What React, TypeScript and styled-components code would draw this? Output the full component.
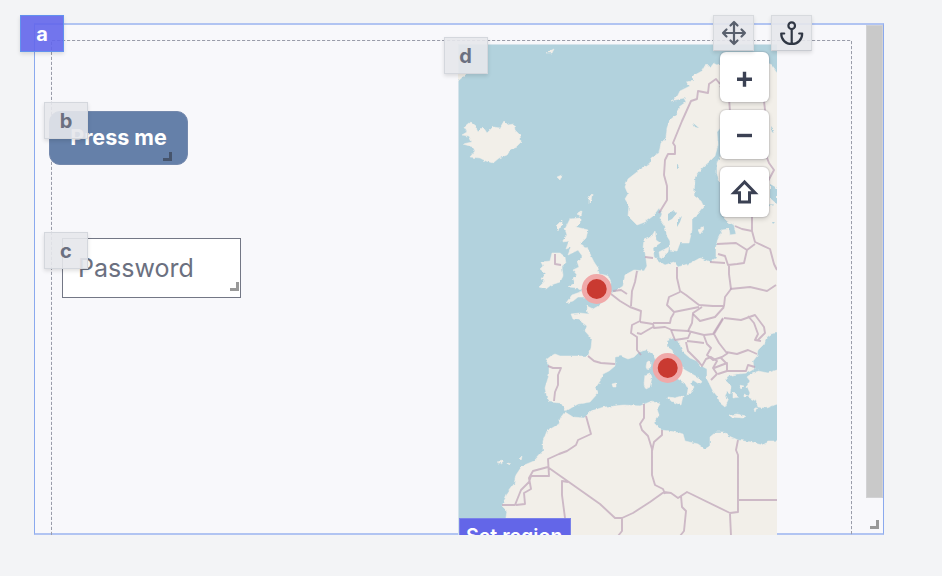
import React from 'react';
import styled, { createGlobalStyle } from 'styled-components';

const GlobalStyle = createGlobalStyle`
  * { box-sizing: border-box; }
  body { margin: 0; background: #f3f4f6; font-family: Inter, "Liberation Sans", sans-serif; overflow: hidden; }
`;

const Workspace = styled.main`
  height: 576px;
  padding: 23px 58px 41px 34px;
  background: #f3f4f6;
`;

const Frame = styled.section`
  position: relative;
  display: flex;
  width: 850px;
  height: 512px;
  border: 1px solid #8aa9ee;
  border-top: 2px solid #b1c4f2;
  border-bottom: 2px solid #b1c4f2;
  background: #f8f8fb;
`;

const Content = styled.div`
  flex: 1;
  display: grid;
  grid-template-columns: 423px 319px;
  align-items: start;
`;

const FormColumn = styled.div`
  display: flex;
  flex-direction: column;
  align-items: flex-start;
  gap: 73px;
  padding: 86px 0 0 14px;
`;

const MapColumn = styled.div`
  padding-top: 19px;
`;

const DashedGuide = styled.svg`
  position: absolute;
  left: 16px;
  top: 15px;
`;

const ButtonWidget = styled.div`
  position: relative;
`;

const FieldWidget = styled.div`
  position: relative;
  margin-left: 13px;
`;

const MapWidget = styled.div`
  position: relative;
`;

type BadgeKind = 'frame' | 'button' | 'field' | 'map';

const badgeInset: Record<BadgeKind, string> = {
  frame: '-10px auto auto -15px',
  button: '-9px auto auto -5px',
  field: '-6px auto auto -18px',
  map: '-7px auto auto -14.5px',
};

const Badge = styled.span<{ $kind: BadgeKind }>`
  position: absolute;
  z-index: 2;
  inset: ${p => badgeInset[p.$kind]};
  width: 44px;
  height: 37px;
  display: flex;
  align-items: center;
  justify-content: center;
  color: ${p => (p.$kind === 'frame' ? '#fff' : '#6b7080')};
  background: ${p => (p.$kind === 'frame' ? 'rgba(99,102,235,.9)' : 'rgba(229,231,235,.9)')};
  border: 1px solid ${p => (p.$kind === 'frame' ? '#6291ef' : '#d4d7dd')};
  box-shadow: 0 2px 4px rgba(0, 0, 0, .12);
  font-size: 20px;
  font-weight: 700;
  line-height: 1;
`;

const PressButton = styled.button`
  display: block;
  width: 139px;
  height: 54px;
  padding: 0 0 2px;
  border: 1px solid #7489ad;
  border-radius: 11px;
  background: #6580a9;
  color: #fff;
  font: 700 21.5px Inter, sans-serif;
`;

const PasswordField = styled.div`
  width: 179px;
  height: 60px;
  padding-left: 15px;
  border: 1px solid #737785;
  background: #fff;
  color: #6b7080;
  font-size: 25px;
  line-height: 59px;
`;

const Grip = styled.i<{ $right: number; $bottom: number; $color?: string }>`
  position: absolute;
  right: ${p => p.$right}px;
  bottom: ${p => p.$bottom}px;
  width: 9px;
  height: 9px;
  border: solid ${p => p.$color ?? '#999'};
  border-width: 0 3px 3px 0;
`;

const MapView = styled.div`
  position: relative;
  width: 319px;
  height: 491px;
  overflow: hidden;
`;

const MapDrawing = styled.svg`
  display: block;
`;

/* Controls and label share one overlay above the map drawing. */
const MapOverlay = styled.div`
  position: absolute;
  inset: 0;
  display: flex;
  flex-direction: column;
  justify-content: space-between;
  padding: 8px 8px 0 1px;
`;

const MapControls = styled.div`
  align-self: flex-end;
  display: grid;
  gap: 8px;
`;

const MapButton = styled.button`
  width: 49px;
  height: 49.5px;
  padding: 0;
  display: grid;
  place-items: center;
  border: 0;
  border-radius: 6px;
  background: #fff;
  box-shadow: 0 0 1px 1px rgba(60, 65, 85, .13), 0 2px 5px rgba(0, 0, 0, .16);
`;

const RegionLabel = styled.div`
  width: 112px;
  height: 17px;
  padding-left: 6px;
  background: #6366e8;
  border: 1px solid #7a82ea;
  border-bottom: 0;
  color: #fff;
  font-size: 19.6px;
  font-weight: 600;
  line-height: 34px;
  white-space: nowrap;
`;

const Toolbar = styled.div`
  position: absolute;
  z-index: 3;
  left: 255px;
  top: -29px;
  display: flex;
  gap: 17px;
`;

const ToolButton = styled.button`
  width: 41px;
  height: 36px;
  padding: 0;
  display: grid;
  place-items: center;
  border: 1px solid #d7dade;
  border-bottom-color: #c8cbd1;
  background: rgba(229, 231, 235, .9);
  box-shadow: 0 2px 4px rgba(0, 0, 0, .12);
`;

const ScrollRail = styled.div`
  flex: 0 0 17px;
`;

const ScrollThumb = styled.div`
  height: 473px;
  border: 1px solid #d2d2d4;
  background: #c9c9c9;
`;

const MAINLAND =
  'M777 332L771 334 767 337 764 344 758 350 757 356 753 361 754 369 747 373 737 374 728 376 725 380 731 386 730 394 727 392 725 396 728 401 725 407 720 403 718 397 713 391 710 385 707 379 707 369 700 365 697 361 690 358 683 352 679 342 673 338 667 341 667 347 672 350 675 357 679 365 685 370 692 374 699 378 702 382 699 384 693 380 691 383 694 387 691 392 687 396 688 389 685 383 678 379 672 376 662 368 656 361 653 354 646 350 639 352 634 357 628 359 621 356 615 357 615 366 609 371 603 374 600 381 596 387 598 393 590 402 578 404 571 408 566 411 561 403 550 402 547 397 545 388 549 375 549 365 546 360 551 356 555 354 560 356 575 356 588 356 591 348 592 339 585 331 587 326 579 320 573 319 571 314 580 313 588 314 587 306 593 309 602 304 606 297 616 291 623 286 625 275 634 270 644 271 647 266 645 252 643 248 644 240 651 237 655 231 656 240 660 243 653 248 654 257 660 262 665 265 674 262 678 267 691 263 700 258 710 262 716 258 716 247 718 238 722 230 729 229 730 235 736 234 734 225 727 221 723 217 739 211 777 205Z';
const SCANDINAVIA =
  'M777 73L771 65 760 60 744 62 724 68 714 63 710 68 706 64 702 71 693 76 693 81 686 82 690 86 680 91 677 97 671 101 684 98 686 102 679 107 677 114 670 120 667 128 666 138 661 143 659 153 651 158 650 163 637 172 628 179 625 187 628 194 625 199 629 205 628 216 637 225 645 222 653 216 659 208 662 214 660 219 665 226 667 236 670 241 670 250 677 251 680 243 689 243 692 230 692 219 698 214 704 207 701 201 694 196 695 177 703 167 710 161 715 156 718 145 717 132 725 122 738 118 732 127 723 140 722 153 717 163 717 174 721 184 722 198 740 205 777 204Z';
const AFRICA =
  'M565 412L573 417 584 418 591 411 604 407 624 405 640 406 652 401 660 404 657 409 659 415 654 423 661 430 670 431 683 434 685 441 698 444 705 449 710 446 710 437 716 432 724 432 729 436 738 440 750 442 762 445 768 441 777 441 777 536 503 536 507 511 502 506 508 492 514 484 516 475 522 466 534 461 543 451 543 441 547 431 559 424 561 417Z';
const BRITAIN =
  'M570 219L580 218 580 223 576 227 588 230 586 238 580 244 587 247 591 256 594 262 598 268 599 274 608 276 611 283 606 291 607 295 593 296 586 297 578 297 573 301 566 303 572 295 583 291 578 288 568 287 575 283 573 278 577 275 573 270 579 267 577 261 583 257 578 250 568 255 571 247 566 249 569 241 562 242 567 235 565 229Z';
const IRELAND =
  'M552 253L560 253 565 257 566 264 562 267 563 276 560 282 551 285 546 289 539 287 545 281 541 279 545 273 540 269 543 266 541 262 550 261Z';
const ICELAND =
  'M462 135L467 132 464 127 470 122 475 126 478 132 483 127 487 133 493 127 500 128 504 121 508 125 514 124 515 130 520 135 521 142 516 147 511 149 507 155 499 158 493 163 486 161 480 158 470 157 475 151 473 147 463 144 472 142 469 136Z';
const TURKEY =
  'M777 370L768 373 758 371 752 373 747 377 750 381 747 386 750 393 748 397 756 401 758 407 767 408 777 404Z';
const ISLANDS = [
  'M647 362L650 361 650 369 648 371 646 367Z',
  'M645 375L650 373 652 377 650 387 646 389 644 384Z',
  'M668 397L675 398 683 396 681 405 676 403 668 399Z',
  'M659 252L665 249 669 247 668 252 664 256 660 258Z',
  'M698 230L703 226 704 229 700 234Z',
  'M730 415L737 414 746 416 743 418 731 417Z',
  'M612 384L616 383 616 387 613 387Z',
  'M458 74L466 74 458 81Z',
  'M557 177L562 175 560 180Z',
  'M589 197L592 194 591 202 589 203Z',
  'M577 214L582 211 581 216Z',
  'M556 226L562 220 562 225 558 231Z',
  'M497 462L502 461 502 464ZM508 463L511 464 509 466Z',
  'M519 459L522 456 521 461Z',
  'M546 53L554 49 552 53Z',
  'M739 385L744 386 741 389ZM744 394L748 396 744 398ZM733 391L739 397 733 398Z',
  'M754 409L757 407 755 412Z',
];
const LAKES =
  'M668 214l6-4 3 3-5 6-4 2zM677 221l5-5-2 6-3 5zM770 184l7 4v16l-7-6zM771 126l3 4-2 3zM677 164l2 4-2 1zM693 123l6 5-4-1zM772 222l3 0-2 2z';
const BORDERS = [
  'M659 213L667 200 667 186 664 175 665 160 668 154 675 154 675 146 673 143 682 121 691 101 697 99 698 91 708 93 709 84 716 79 720 84',
  'M720 86L729 98 730 112 733 125M763 92L765 110 763 130 764 150 769 163 774 170 766 185 764 205',
  'M555 254L555 264 561 265',
  'M645 257L653 258M637 271L635 282 632 291 631 306M613 291L621 290 627 294M611 294L620 301 630 307 641 311 640 321 632 325 631 333 637 337 637 350 641 355',
  'M677 267L677 278 680 291 686 295 699 305 713 306 724 306 725 297 731 289 729 274 729 266M680 292L669 297 667 305 674 312 689 309 699 307M674 313L671 318 670 323 653 323M640 322L653 324 654 328 665 327 672 330 688 331 692 323 693 313 702 307',
  'M693 314L700 321 715 317 724 307M723 318L713 334 704 335 688 331M653 327L646 331 641 334 637 333M671 330L675 340 688 338 691 331',
  'M588 356L594 361 601 363 615 364M548 366L553 368 561 368 558 375 558 385 555 392 554 401',
  'M717 244L736 243 747 250 744 263 737 264 728 265 725 256 718 254M710 262L725 263M735 226L742 229 752 231 755 242 770 249 774 264 777 270M747 250L755 244M730 289L750 287 767 291 776 285M752 232L752 213',
  'M724 318L741 320 755 315 764 327 765 333 758 340M723 319L714 334 719 343 726 352 737 354 748 350 757 354M748 316L754 323 758 334 755 340 761 341',
  'M704 336L707 344 711 348 707 355 713 360 722 357 728 353M687 341L696 342 704 343M686 342L688 351 699 362 702 366 706 359 711 357 717 361 713 368 717 374 711 380M714 368L727 363 727 371 746 371 748 365 755 367M718 374L727 371M721 358L727 364',
  'M586 416L591 434 578 440 576 445 567 451 559 454 548 459 549 476 531 476 529 482 521 490 515 505 502 505M548 467L533 471 529 478 531 489 524 493 525 504 516 505M549 468L600 504 615 518 622 518 633 513 650 502 664 492 671 493 678 498 687 492 730 513 738 512 738 455 736 450 738 440M644 404L644 418 640 424 642 430 648 436 652 449 652 475 655 485 663 489 665 494M662 430L662 435 654 442 652 451M681 496L682 507 686 511 684 531 680 536M730 514L731 536M739 500L777 500M622 518L622 531 618 536M568 482L562 481 562 495 565 518',
];

function EuropeMap() {
  return (
    <MapDrawing width="319" height="491" viewBox="458 44 319 491" aria-label="Map of Europe">
      <defs>
        <filter id="coast" filterUnits="userSpaceOnUse" x="450" y="36" width="335" height="507">
          <feTurbulence type="fractalNoise" baseFrequency=".22" numOctaves="2" seed="7" />
          <feDisplacementMap in="SourceGraphic" scale="3" xChannelSelector="R" yChannelSelector="G" />
          <feGaussianBlur stdDeviation=".6" />
        </filter>
        <filter id="border" filterUnits="userSpaceOnUse" x="450" y="36" width="335" height="507">
          <feGaussianBlur stdDeviation=".45" />
        </filter>
      </defs>
      <path fill="#d4e3eb" d="M458 44h319v491H458z" />
      <path fill="#b2d2dd" d="M459 45h318v490H459z" />
      <g fill="#f2efe9" stroke="#f2efe9" strokeWidth=".5" filter="url(#coast)">
        <path d={MAINLAND} />
        <path d={SCANDINAVIA} />
        <path d={AFRICA} />
        <path d="M774 441h10v100h-10zM774 372h10v32h-10zM774 333h10v-127h-10zM774 205h10v-130h-10zM500 530h280v12h-280z" />
        <path d={BRITAIN} />
        <path d={IRELAND} />
        <path d={ICELAND} />
        <path d={TURKEY} />
        {ISLANDS.map(d => <path key={d} d={d} />)}
        <path fill="#b2d2dd" stroke="none" d={LAKES} />
      </g>
      <g fill="none" stroke="#bea4b8" strokeOpacity=".72" strokeWidth="1.9" strokeLinejoin="round" filter="url(#border)">
        {BORDERS.map(d => <path key={d} d={d} />)}
      </g>
      {[[596.7, 289], [667.7, 368]].map(([x, y]) => (
        <circle key={x} cx={x} cy={y} r="12.5" fill="#c93a31" stroke="#f0a9a9" strokeWidth="5" />
      ))}
    </MapDrawing>
  );
}

export default function App() {
  return (
    <>
      <GlobalStyle />
      <Workspace>
        <Frame>
          <DashedGuide width="801" height="495">
            <path d="M.5 495V.5H800.5V495" fill="none" stroke="#9a9daa" strokeDasharray="3.2 1.8" />
          </DashedGuide>
          <Badge $kind="frame">a</Badge>
          <Content>
            <FormColumn>
              <ButtonWidget>
                <PressButton>Press me</PressButton>
                <Grip $right={16} $bottom={4} $color="#46546c" />
                <Badge $kind="button">b</Badge>
              </ButtonWidget>
              <FieldWidget>
                <PasswordField>Password</PasswordField>
                <Grip $right={2} $bottom={7} />
                <Badge $kind="field">c</Badge>
              </FieldWidget>
            </FormColumn>
            <MapColumn>
              <MapWidget>
                <MapView>
                  <EuropeMap />
                  <MapOverlay>
                    <MapControls>
                      <MapButton aria-label="Zoom in">
                        <svg width="26" height="26"><path d="M5 15.2h15M12.500 7.700v15" stroke="#3b4153" strokeWidth="3.400" /></svg>
                      </MapButton>
                      <MapButton aria-label="Zoom out">
                        <svg width="26" height="26"><path d="M5 14.500h15" stroke="#3b4153" strokeWidth="3.400" /></svg>
                      </MapButton>
                      <MapButton aria-label="Reset view">
                        <svg width="30" height="30"><path d="M14.500 5L4 15.800H9.500V25H19.500V15.800H25Z" fill="none" stroke="#3b4153" strokeWidth="3" /></svg>
                      </MapButton>
                    </MapControls>
                    <RegionLabel>Set region</RegionLabel>
                  </MapOverlay>
                </MapView>
                <Badge $kind="map">d</Badge>
                <Toolbar>
                  <ToolButton aria-label="Move">
                    <svg width="26" height="26" fill="none" stroke="#59606d" strokeWidth="2.200" strokeLinecap="round" strokeLinejoin="round">
                      <path d="M13 2v22M2 13h22M9.500 5.500L13 2l3.500 3.500M9.500 20.500L13 24l3.500-3.500M5.500 9.500L2 13l3.500 3.500M20.500 9.500L24 13l-3.500 3.500" />
                    </svg>
                  </ToolButton>
                  <ToolButton aria-label="Anchor">
                    <svg width="26" height="26" fill="none" stroke="#303744" strokeWidth="2.200" strokeLinecap="round" strokeLinejoin="round">
                      <circle cx="12.700" cy="5.700" r="3.300" />
                      <path d="M12.700 9v15M2.200 13.500H5.200M20.200 13.500H23.200M2.200 13.500c0 6.300 4.500 10.500 10.500 10.500S23.200 19.800 23.200 13.500" />
                    </svg>
                  </ToolButton>
                </Toolbar>
              </MapWidget>
            </MapColumn>
          </Content>
          <ScrollRail>
            <ScrollThumb />
          </ScrollRail>
          <Grip $right={4} $bottom={4} />
        </Frame>
      </Workspace>
    </>
  );
}
